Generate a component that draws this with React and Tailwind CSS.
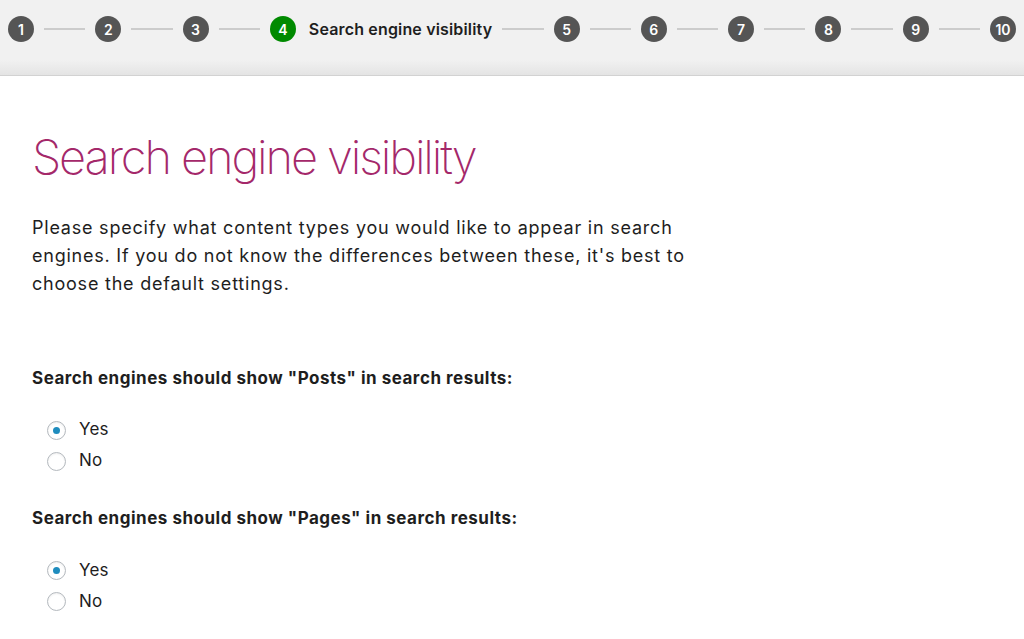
import React from "react";

const steps = ["1", "2", "3", "4", "5", "6", "7", "8", "9", "10"];

function Step({ n, active }) {
  return (
    <div
      className={
        "flex h-[26px] w-[26px] shrink-0 items-center justify-center rounded-full text-[14px] font-semibold text-white " +
        (active ? "bg-[#008a00]" : "bg-[#555555]")
      }
    >
      {n}
    </div>
  );
}

function Radio({ checked, label }) {
  return (
    <label className="flex h-[31px] items-center">
      <span className="ml-[15px] flex h-[19px] w-[19px] items-center justify-center rounded-full border border-[#b4b9be] bg-white shadow-[inset_0_1px_2px_rgba(0,0,0,0.07)]">
        {checked && <span className="h-[7px] w-[7px] rounded-full bg-[#1e8cbe]" />}
      </span>
      <span className="ml-[13px] text-[17px] tracking-[0.01em] text-[#1e1e1e]">{label}</span>
    </label>
  );
}

function Question({ label, gap = 23 }) {
  return (
    <div>
      <p className="text-[17px] font-bold tracking-[0.03em] text-[#1e1e1e]">{label}</p>
      <div className={"flex flex-col " + (gap === 24 ? "mt-[24px]" : "mt-[23px]")}>
        <Radio checked label="Yes" />
        <Radio label="No" />
      </div>
    </div>
  );
}

export default function App() {
  return (
    <div className="h-[639px] overflow-hidden bg-white font-['Inter','Liberation_Sans',sans-serif]">
      {/* stepper */}
      <div className="h-[76px] border-b border-[#d2d2d2] bg-[linear-gradient(to_bottom,#f1f1f1_80%,#e4e4e4)]">
        <div className="flex items-center px-[8px] pt-[16px]">
          {steps.map((n, i) => (
            <React.Fragment key={n}>
              <Step n={n} active={n === "4"} />
              {n === "4" && (
                <span className="ml-[13px] whitespace-nowrap text-[16px] font-semibold tracking-[0.01em] text-[#1e1e1e]">
                  Search engine visibility
                </span>
              )}
              {i < steps.length - 1 && (
                <div className="mx-[10px] h-[2px] flex-1 bg-[#cccccc]" />
              )}
            </React.Fragment>
          ))}
        </div>
      </div>

      {/* content */}
      <div className="px-[32px]">
        <h1 className="mt-[52px] text-[47px] font-extralight leading-[58px] tracking-[-0.045em] text-[#a4286a]">
          Search engine visibility
        </h1>
        <p className="mt-[28px] w-[690px] text-[18px] leading-[28px] tracking-[0.043em] text-[#1e1e1e]">
          Please specify what content types you would like to appear in search
          engines. If you do not know the differences between these, it's best
          to choose the default settings.
        </p>
        <div className="mt-[68px]">
          <Question label={'Search engines should show "Posts" in search results:'} />
        </div>
        <div className="mt-[29px]">
          <Question label={'Search engines should show "Pages" in search results:'} gap={24} />
        </div>
      </div>
    </div>
  );
}
